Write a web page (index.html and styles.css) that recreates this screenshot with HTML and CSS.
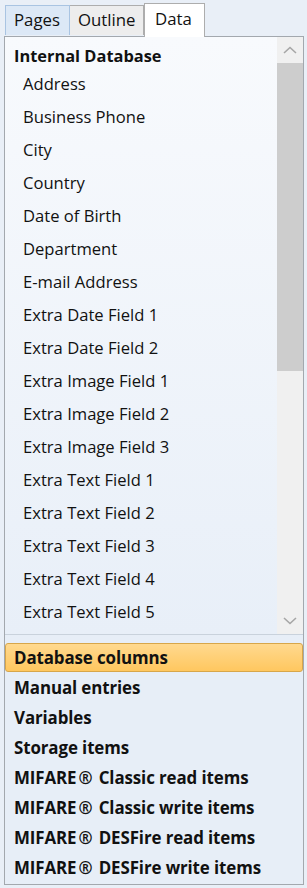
FILE: index.html
```html
<!DOCTYPE html>
<html>
<head>
<meta charset="utf-8">
<link rel="stylesheet" href="styles.css">
</head>
<body>
<div class="tabs">
  <div class="tab tab-pages">Pages</div>
  <div class="tab tab-outline">Outline</div>
  <div class="tab tab-data">Data</div>
</div>
<div class="panel">
  <div class="listwrap">
    <div class="list">
      <div class="hdr">Internal Database</div>
      <div class="row">Address</div>
      <div class="row">Business Phone</div>
      <div class="row">City</div>
      <div class="row">Country</div>
      <div class="row">Date of Birth</div>
      <div class="row">Department</div>
      <div class="row">E-mail Address</div>
      <div class="row">Extra Date Field 1</div>
      <div class="row">Extra Date Field 2</div>
      <div class="row">Extra Image Field 1</div>
      <div class="row">Extra Image Field 2</div>
      <div class="row">Extra Image Field 3</div>
      <div class="row">Extra Text Field 1</div>
      <div class="row">Extra Text Field 2</div>
      <div class="row">Extra Text Field 3</div>
      <div class="row">Extra Text Field 4</div>
      <div class="row">Extra Text Field 5</div>
    </div>
    <div class="scrollbar">
      <div class="sb-btn"><svg width="14" height="8" viewBox="0 0 14 8"><path d="M1 7 L7 1.5 L13 7" fill="none" stroke="#a6a6a6" stroke-width="1.6"/></svg></div>
      <div class="sb-track">
        <div class="sb-thumb"></div>
      </div>
      <div class="sb-btn"><svg width="14" height="8" viewBox="0 0 14 8"><path d="M1 1 L7 6.5 L13 1" fill="none" stroke="#a6a6a6" stroke-width="1.6"/></svg></div>
    </div>
  </div>
  <div class="nav">
    <div class="nav-item active">Database columns</div>
    <div class="nav-item">Manual entries</div>
    <div class="nav-item">Variables</div>
    <div class="nav-item">Storage items</div>
    <div class="nav-item">MIFARE<span class="reg">®</span> Classic read items</div>
    <div class="nav-item">MIFARE<span class="reg">®</span> Classic write items</div>
    <div class="nav-item">MIFARE<span class="reg">®</span> DESFire read items</div>
    <div class="nav-item">MIFARE<span class="reg">®</span> DESFire write items</div>
  </div>
</div>
</body>
</html>
```
FILE: styles.css
```css
html, body {
  margin: 0;
  padding: 0;
}
body {
  width: 307px;
  height: 888px;
  background: #e9eff7;
  font-family: "Open Sans", "Noto Sans", sans-serif;
  color: #111;
  overflow: hidden;
}
.tabs {
  display: flex;
  align-items: flex-end;
  height: 36px;
  padding-left: 5px;
  box-sizing: border-box;
}
.tab {
  box-sizing: border-box;
  font-size: 16.8px;
  height: 30px;
  line-height: 28px;
  border: 1px solid #adadad;
  border-bottom: none;
  margin-bottom: 1px;
}
.tab-pages {
  width: 65px;
  padding-left: 8px;
  background: #dce8f6;
  border-color: #a9c4e2;
}
.tab-outline {
  width: 74px;
  padding-left: 8px;
  background: #ededed;
  border-left: none;
}
.tab-data {
  width: 61px;
  height: 34px;
  line-height: 30px;
  padding-left: 10px;
  background: #ffffff;
  border-left: 1px solid #adadad;
  margin-bottom: 0;
  position: relative;
  top: 1px;
}
.panel {
  margin-left: 4px;
  width: 300px;
  height: 849px;
  box-sizing: border-box;
  border: 1px solid #a3a8ae;
  display: flex;
  flex-direction: column;
}
.listwrap {
  height: 597px;
  display: flex;
  background: linear-gradient(#f8fafd, #e8eff8);
  border-bottom: 1px solid #c9d2dc;
  overflow: hidden;
}
.list {
  flex: 1;
  padding-top: 5px;
}
.hdr {
  height: 26px;
  line-height: 27px;
  padding-left: 9px;
  font-weight: 700;
  font-size: 16.4px;
}
.row {
  height: 33px;
  line-height: 32px;
  padding-left: 18px;
  font-size: 16.6px;
  white-space: nowrap;
}
.scrollbar {
  width: 26px;
  display: flex;
  flex-direction: column;
  background: #f0f0f0;
}
.sb-btn {
  height: 26px;
  display: flex;
  align-items: center;
  justify-content: center;
}
.sb-track {
  flex: 1;
}
.sb-thumb {
  height: 308px;
  background: #cdcdcd;
}
.nav {
  flex: 1;
  padding-top: 8px;
  background: #e7eef7;
}
.nav-item {
  box-sizing: border-box;
  height: 30px;
  line-height: 30px;
  padding-left: 9px;
  font-weight: 700;
  font-size: 16.9px;
  letter-spacing: -0.1px;
  white-space: nowrap;
}
.reg {
  padding-left: 2px;
  padding-right: 2px;
}
.nav-item.active {
  height: 29px;
  line-height: 27px;
  margin-bottom: 1px;
  padding-left: 8px;
  border: 1px solid #d7a64a;
  border-radius: 3px;
  background: linear-gradient(#ffd98f, #ffc75f);
}
```
